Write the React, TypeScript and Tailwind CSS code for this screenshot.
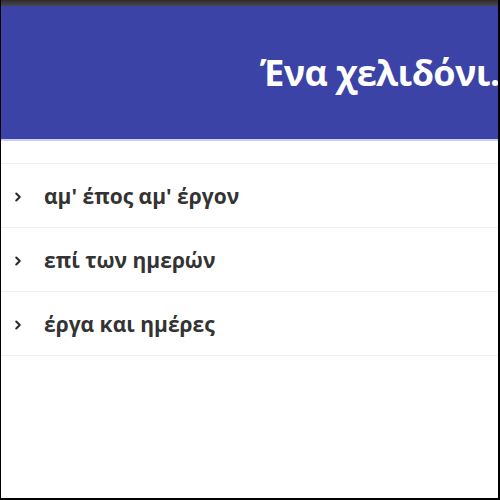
import { ChevronRight } from "lucide-react";

const items = ["αμ' έπος αμ' έργον", "επί των ημερών", "έργα και ημέρες"];

export default function App() {
  return (
    <div className="w-[500px] h-[500px] bg-white border-l border-r-2 border-b-2 border-black overflow-hidden flex flex-col" style={{ fontFamily: '"Open Sans", "Noto Sans", sans-serif' }}>
      {/* window top strip */}
      <div className="h-[6px] shrink-0 bg-gradient-to-b from-[#2f2b2b] to-[#4a4650]" />

      {/* header */}
      <header className="h-[135px] shrink-0 bg-[#3c43a7] flex items-center overflow-hidden border-b-2 border-[#c9cdf0]">
        <h1 className="pl-[259px] text-[36px] font-bold text-white whitespace-nowrap tracking-[-0.6px]">
          Ένα χελιδόνι...
        </h1>
      </header>

      {/* list */}
      <ul className="mt-[22px] border-t border-[#f0f0f0]">
        {items.map((item) => (
          <li key={item} className="h-[64px] flex items-center border-b border-[#f0f0f0] pt-[3px]">
            <ChevronRight size={14} strokeWidth={3.5} className="ml-[10px] text-[#2b2b2b]" />
            <span className="ml-[19px] text-[21px] font-bold text-[#333333]">{item}</span>
          </li>
        ))}
      </ul>
    </div>
  );
}
